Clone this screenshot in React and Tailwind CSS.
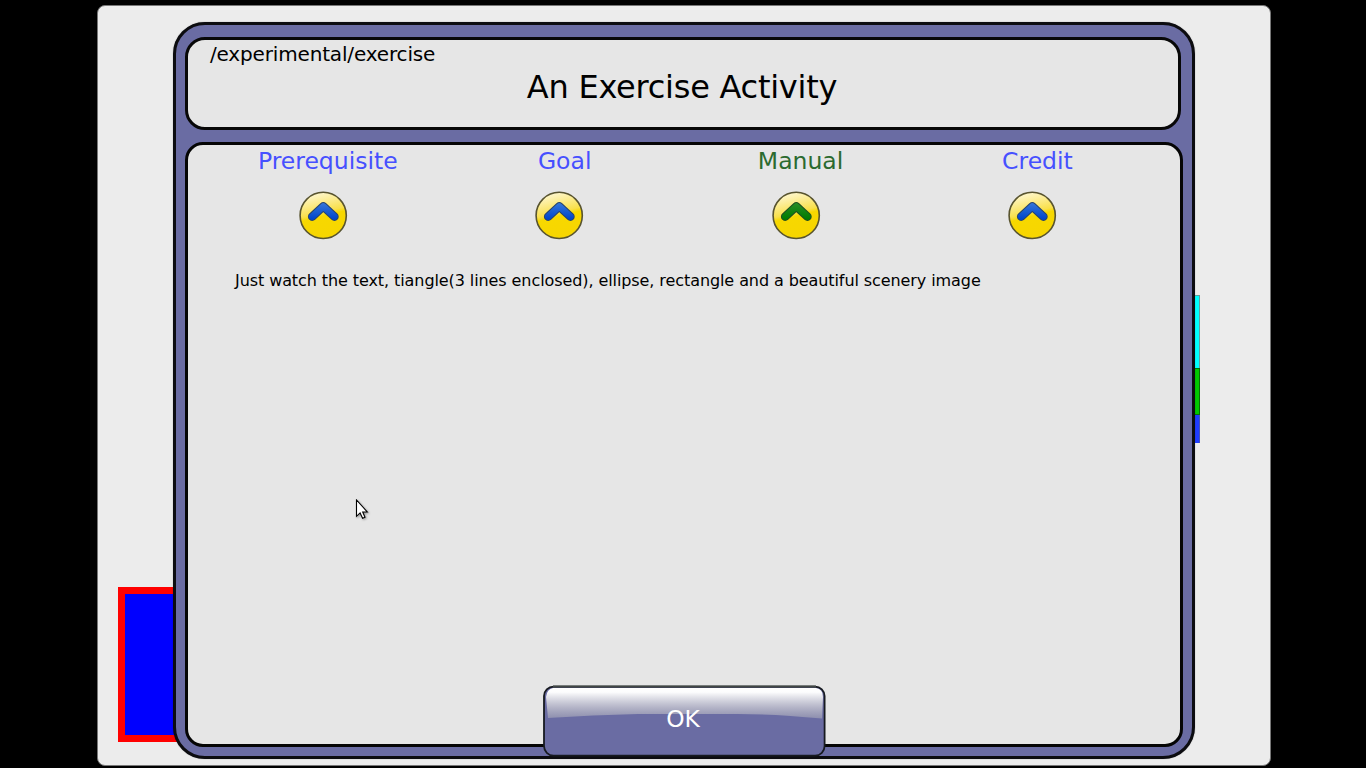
const TABS = [
  { label: 'Prerequisite', color: 'text-[#4650ff]', arrow: 'blue', shift: 'pl-[10px]' },
  { label: 'Goal', color: 'text-[#4650ff]', arrow: 'blue', shift: 'pl-[11px]' },
  { label: 'Manual', color: 'text-[#2b6a2f]', arrow: 'green', shift: 'pl-[10px]' },
  { label: 'Credit', color: 'text-[#4650ff]', arrow: 'blue', shift: 'pl-[11px]' },
];

const ARROWS = {
  blue: { top: '#3173d8', bottom: '#0046cc', edge: '#27446c' },
  green: { top: '#278b24', bottom: '#007c00', edge: '#1f501f' },
};

function ArrowIcon({ kind }) {
  const c = ARROWS[kind];
  return (
    <svg width="50" height="50" viewBox="0 0 50 50" className="block">
      <defs>
        <linearGradient id={`shine-${kind}`} x1="0.1" y1="0" x2="0.35" y2="1">
          <stop offset="0" stopColor="#fffbe5" />
          <stop offset="0.5" stopColor="#f9e04b" />
          <stop offset="0.58" stopColor="#f7d800" />
          <stop offset="1" stopColor="#f7d600" />
        </linearGradient>
        <linearGradient id={`arrow-${kind}`} gradientUnits="userSpaceOnUse" x1="0" y1="14" x2="0" y2="29">
          <stop offset="0" stopColor={c.top} />
          <stop offset="1" stopColor={c.bottom} />
        </linearGradient>
      </defs>
      <circle cx="25.2" cy="25.4" r="23.1" fill={`url(#shine-${kind})`} stroke="#58542f" strokeWidth="1.6" />
      <path d="M14.200 26.600 25.300 16.400 36.400 26.600" fill="none" stroke={c.edge} strokeWidth="8.6" strokeLinecap="round" strokeLinejoin="round" />
      <path d="M14.200 26.600 25.300 16.400 36.400 26.600" fill="none" stroke={`url(#arrow-${kind})`} strokeWidth="6.4" strokeLinecap="round" strokeLinejoin="round" />
    </svg>
  );
}

function Scene() {
  return (
    <>
      <div className="absolute left-[20px] top-[581px] h-[155px] w-[120px] border-[7px] border-[#ff0000] bg-[#0000ff]" />
      <div className="absolute left-[1062px] top-[289px] flex h-[148px] w-[40px] flex-col">
        <div className="h-[73px] border-r border-t border-[#649f9f] bg-[#00ffff]" />
        <div className="h-[47px] border-b border-r border-t border-[#066d06] bg-[#00c800]" />
        <div className="flex-1 border-r border-[#4353b8] bg-[#1e3cff]" />
      </div>
    </>
  );
}

function OkButton() {
  return (
    <button className="relative h-[72px] w-[283px] text-[23.300px] text-white">
      <svg width="283" height="72" viewBox="0 0 283 72" className="absolute inset-0">
        <defs>
          <linearGradient id="ok-gloss" x1="0" y1="0" x2="0" y2="1">
            <stop offset="0" stopColor="#fff" />
            <stop offset="0.14" stopColor="#fff" stopOpacity="0.98" />
            <stop offset="1" stopColor="#c0c0c0" stopOpacity="0.42" />
          </linearGradient>
        </defs>
        <rect x="1" y="1.6" width="280.6" height="69" rx="9.5" fill="#6a6ca3" stroke="#171a20" strokeWidth="1.8" />
        <path d="M10 3H273Q280 4 280 12L279 33.500Q230 29 195 29H95Q50 30 5 33L3 12Q4 4 10 3Z" fill="url(#ok-gloss)" />
        <path d="M10 1.500H273" stroke="#414744" strokeWidth="2" />
      </svg>
      <span className="relative -left-[1.500px] -top-[2px]">OK</span>
    </button>
  );
}

function Pointer() {
  return (
    <svg width="14" height="22" viewBox="0 0 14 22" className="absolute left-[355px] top-[499px] drop-shadow-[1px_1px_1px_rgba(0,0,0,0.35)]">
      <path d="M1.500 1V17.300L5.100 13.900L7.600 19.300L10 18.200L7.700 13H12.300Z" fill="#fff" stroke="#000" strokeWidth="1.100" />
    </svg>
  );
}

export default function App() {
  return (
    <div className="relative h-[768px] w-[1366px] overflow-hidden bg-black pl-[97px] pt-[5px] font-['DejaVu_Sans',sans-serif] text-black">
      <div className="relative h-[761px] w-[1174px] rounded-[8px] border border-[#777] bg-[#ececec] pl-[75px] pt-[16px]">
        <Scene />
        <div className="relative flex h-[737px] w-[1022px] flex-col rounded-[32px] border-[3px] border-[#0c0c10] bg-[#6a6ca3] pl-[9px] pt-[12px] shadow-[0_0_1px_rgba(0,0,0,0.5)]">
          <header className="h-[93px] w-[996px] shrink-0 rounded-[20px] border-[3px] border-[#080808] bg-[#e6e6e6]">
            <p className="h-[29px] pl-[22px] text-[20px] leading-[28px] tracking-[-0.160px]">/experimental/exercise</p>
            <h1 className="pr-[2px] text-center text-[32px] leading-[36px] tracking-[-0.250px]">An Exercise Activity</h1>
          </header>
          <main className="mt-[12px] flex h-[605px] w-[998px] shrink-0 flex-col rounded-[18px] border-[3px] border-[#050505] bg-[#e6e6e6]">
            <nav className="flex pl-[16.600px]">
              {TABS.map((tab) => (
                <div key={tab.label} className="flex w-[236.400px] flex-col items-center">
                  <span className={`h-[45px] text-[23.500px] leading-[32px] ${tab.shift} ${tab.color}`}>{tab.label}</span>
                  <ArrowIcon kind={tab.arrow} />
                </div>
              ))}
            </nav>
            <p className="pl-[47px] pt-[29px] text-[16px] leading-[24px] tracking-[-0.085px]">
              Just watch the text, tiangle(3 lines enclosed), ellipse, rectangle and a beautiful scenery image
            </p>
            <div className="mt-auto -mb-[13px] pl-[355px]">
              <OkButton />
            </div>
          </main>
        </div>
      </div>
      <Pointer />
    </div>
  );
}
